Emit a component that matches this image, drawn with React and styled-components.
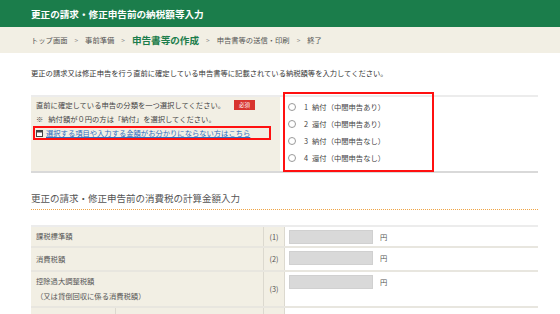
import React from "react";
import styled, { createGlobalStyle, css } from "styled-components";

const Global = createGlobalStyle`
  html, body { margin: 0; padding: 0; background: #fff; }
  body {
    font-family: "Noto Sans CJK JP", "Noto Sans", sans-serif;
    color: #333;
    width: 560px;
    overflow: hidden;
  }
`;

const GREEN = "#1b7d4b";
const BEIGE = "#f2efe4";

const Header = styled.header`
  height: 27px;
  background: ${GREEN};
  display: flex;
  align-items: center;
  padding-left: 31px;
`;

const Title = styled.h1`
  margin: 0;
  font-size: 9.6px;
  font-weight: 700;
  color: #fff;
  letter-spacing: 0;
`;

const Crumbs = styled.nav`
  height: 26px;
  background: ${BEIGE};
  display: flex;
  align-items: center;
  gap: 7px;
  padding-left: 31px;
  font-size: 7.3px;
  color: #555;
`;

const Crumb = styled.span`
  ${(p) =>
    p.$active &&
    css`
      font-size: 9.6px;
      font-weight: 700;
      color: ${GREEN};
    `}
`;

const Sep = styled.span`
  font-size: 6.5px;
  color: #888;
`;

const Main = styled.main`
  padding: 0 22px 0 31px;
`;

const Intro = styled.p`
  margin: 13px 0 0;
  font-size: 7.3px;
  line-height: 14px;
  color: #333;
`;

const ChoiceSection = styled.div`
  margin-top: 15px;
  display: grid;
  grid-template-columns: 249px 1fr;
  border-top: 2px solid #ececec;
  border-bottom: 2px solid #d9d9d9;
`;

const LeftCell = styled.div`
  background: ${BEIGE};
  padding: 1px 5px 8px;
  font-size: 7.3px;
  line-height: 14px;
  color: #444;
`;

const Line = styled.div`
  display: flex;
  align-items: center;
  height: 14px;
`;

const Badge = styled.span`
  margin-left: 9px;
  background: #d8342f;
  color: #fff;
  font-size: 5.5px;
  line-height: 10px;
  height: 10px;
  padding: 0 5px;
`;

const Mark = styled.span`
  margin-right: 5px;
`;

const LinkRow = styled.div`
  margin-left: -3px;
  width: 238px;
  height: 14px;
  box-sizing: border-box;
  border: 2px solid #ff1010;
  display: flex;
  align-items: center;
  gap: 3px;
  padding-left: 1px;
`;

const Link = styled.a`
  color: #2d6cc0;
  text-decoration: underline;
  font-size: 7.3px;
  cursor: pointer;
`;

const RightCell = styled.div`
  position: relative;
  padding: 1px 0 5px 8px;
`;

const Option = styled.label`
  display: flex;
  align-items: center;
  gap: 8px;
  height: 17px;
  font-size: 7.3px;
  color: #444;
`;

const OptNo = styled.span`
  margin-right: 4px;
`;

const Radio = styled.span`
  width: 6px;
  height: 6px;
  border: 1px solid #9a9a9a;
  border-radius: 50%;
  background: #fff;
  flex: none;
`;

const Highlight = styled.div`
  position: absolute;
  left: 3px;
  top: -5px;
  width: 151px;
  height: 80px;
  box-sizing: border-box;
  border: 2px solid #ff1010;
  pointer-events: none;
`;

const SectionTitle = styled.h2`
  margin: 18px 0 0;
  font-size: 9.5px;
  font-weight: 400;
  line-height: 14px;
  color: #555;
  padding-bottom: 4px;
  border-bottom: 1px dotted #f0a443;
`;

const Table = styled.div`
  margin-top: 15px;
  border-top: 2px solid #ececec;
`;

const Row = styled.div`
  display: grid;
  grid-template-columns: 232px 22px 1fr;
  height: ${(p) => p.$h}px;
  box-sizing: border-box;
  border-bottom: 2px solid #e8e6df;
`;

const Label = styled.div`
  background: ${BEIGE};
  padding-left: 5px;
  display: flex;
  flex-direction: column;
  justify-content: center;
  font-size: 7.3px;
  line-height: 15px;
  color: #555;
`;

const SplitLabel = styled.div`
  background: ${BEIGE};
  display: grid;
  grid-template-columns: 84px 1fr;
`;

const SubCell = styled.div`
  & + & {
    border-left: 1px solid #dcd9cf;
  }
`;

const Num = styled.div`
  background: ${BEIGE};
  border-left: 1px solid #dcd9cf;
  border-right: 1px solid #dcd9cf;
  display: flex;
  align-items: center;
  justify-content: center;
  font-size: 7.3px;
  color: #555;
`;

const InputCell = styled.div`
  display: flex;
  align-items: flex-start;
  gap: 7px;
  padding: 3px 0 0 4px;
  font-size: 7.3px;
  line-height: 14px;
  color: #555;
`;

const AmountBox = styled.span`
  width: 84px;
  height: 14px;
  box-sizing: border-box;
  background: #d9d9d9;
  border: 1px solid #d0d0d0;
`;

const WindowIcon = () => (
  <svg width="7" height="7" viewBox="0 0 7 7">
    <rect x="0.5" y="0.5" width="6" height="6" fill="#fff" stroke="#444" />
    <rect x="0.5" y="0.5" width="6" height="2" fill="#444" />
  </svg>
);

const options = [
  ["1", "納付（中間申告あり）"],
  ["2", "還付（中間申告あり）"],
  ["3", "納付（中間申告なし）"],
  ["4", "還付（中間申告なし）"],
];

const rows = [
  { h: 21, label: ["課税標準額"], n: "(1)" },
  { h: 24, label: ["消費税額"], n: "(2)" },
  { h: 36, label: ["控除過大調整税額", "（又は貸倒回収に係る消費税額）"], n: "(3)" },
];

export default function App() {
  return (
    <>
      <Global />
      <Header>
        <Title>更正の請求・修正申告前の納税額等入力</Title>
      </Header>
      <Crumbs>
        <Crumb>トップ画面</Crumb>
        <Sep>&gt;</Sep>
        <Crumb>事前準備</Crumb>
        <Sep>&gt;</Sep>
        <Crumb $active>申告書等の作成</Crumb>
        <Sep>&gt;</Sep>
        <Crumb>申告書等の送信・印刷</Crumb>
        <Sep>&gt;</Sep>
        <Crumb>終了</Crumb>
      </Crumbs>
      <Main>
        <Intro>
          更正の請求又は修正申告を行う直前に確定している申告書等に記載されている納税額等を入力してください。
        </Intro>
        <ChoiceSection>
          <LeftCell>
            <Line>
              直前に確定している申告の分類を一つ選択してください。
              <Badge>必須</Badge>
            </Line>
            <Line>
              <Mark>※</Mark>納付額が０円の方は「納付」を選択してください。
            </Line>
            <LinkRow>
              <WindowIcon />
              <Link>選択する項目や入力する金額がお分かりにならない方はこちら</Link>
            </LinkRow>
          </LeftCell>
          <RightCell>
            {options.map(([no, text]) => (
              <Option key={no}>
                <Radio />
                <span>
                  <OptNo>{no}</OptNo>
                  {text}
                </span>
              </Option>
            ))}
            <Highlight />
          </RightCell>
        </ChoiceSection>
        <SectionTitle>更正の請求・修正申告前の消費税の計算金額入力</SectionTitle>
        <Table>
          {rows.map((r) => (
            <Row key={r.n} $h={r.h}>
              <Label>
                {r.label.map((l) => (
                  <span key={l}>{l}</span>
                ))}
              </Label>
              <Num>{r.n}</Num>
              <InputCell>
                <AmountBox />
                円
              </InputCell>
            </Row>
          ))}
          <Row $h={30}>
            <SplitLabel>
              <SubCell />
              <SubCell />
            </SplitLabel>
            <Num />
            <InputCell />
          </Row>
        </Table>
      </Main>
    </>
  );
}
